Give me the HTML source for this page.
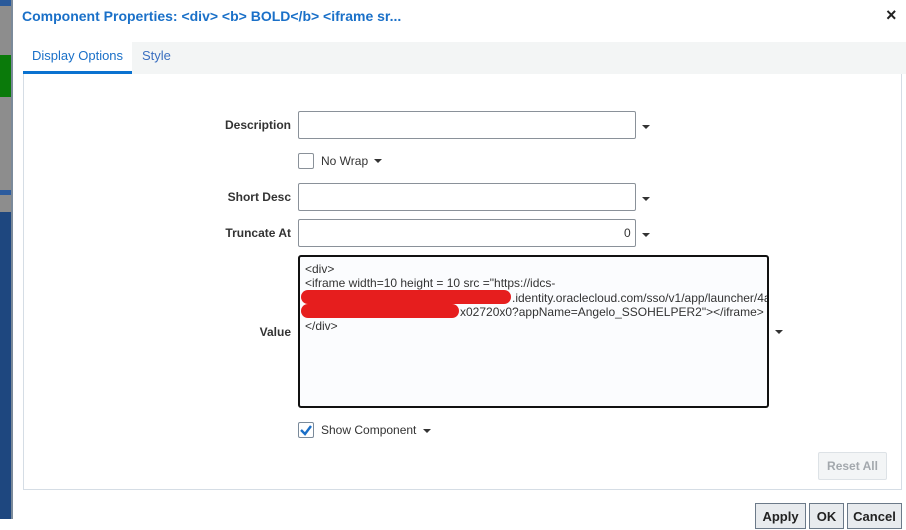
<!DOCTYPE html>
<html><head><style>
body{margin:0;width:906px;height:519px;overflow:hidden;background:#fff;font-family:"Liberation Sans",Arial,sans-serif;position:relative}
.a{position:absolute}
.lbl{position:absolute;right:615px;font-size:12px;font-weight:bold;color:#333;text-align:right}
.inp{position:absolute;left:298px;width:336px;height:26px;border:1px solid #8a9199;border-radius:2px;background:#fff}
.dd{position:absolute;width:0;height:0;border-left:4px solid transparent;border-right:4px solid transparent;border-top:4px solid #333}
.cb{position:absolute;width:14px;height:14px;border:1px solid #8a9199;border-radius:2px;background:#fff}
.btn{position:absolute;top:503px;height:24px;border:1px solid #6c7a89;background:#e8ebee;font-size:13px;font-weight:bold;color:#222;text-align:center;line-height:26px}
</style></head><body>
<div class="a" style="left:0;top:0;width:12px;height:519px;background:#8d8d8d"></div>
<div class="a" style="left:0;top:0;width:12px;height:6px;background:#2a5a9a"></div>
<div class="a" style="left:0;top:55px;width:11px;height:42px;background:#0a7a0a"></div>
<div class="a" style="left:0;top:190px;width:12px;height:5px;background:#2d5c9e"></div>
<div class="a" style="left:0;top:212px;width:12px;height:307px;background:#1e477f"></div>
<div class="a" style="left:11px;top:0;width:2px;height:519px;background:#7b8a9a"></div>
<div class="a" style="left:22px;top:8px;font-size:14px;font-weight:bold;color:#1a70c8">Component Properties: &lt;div&gt; &lt;b&gt; BOLD&lt;/b&gt; &lt;iframe sr...</div>
<div class="a" style="left:886px;top:5px;font-size:18px;font-weight:bold;color:#222">×</div>
<div class="a" style="left:132px;top:42px;width:774px;height:32px;background:#f3f5f5"></div>
<div class="a" style="left:32px;top:48px;font-size:13px;color:#1a70c8">Display Options</div>
<div class="a" style="left:142px;top:48px;font-size:13px;color:#3b6fc0">Style</div>
<div class="a" style="left:23px;top:71px;width:109px;height:3px;background:#0a72d0"></div>
<div class="a" style="left:23px;top:74px;width:877px;height:415px;border:1px solid #d5dde5;border-top:none"></div>

<div class="lbl" style="top:118px">Description</div>
<div class="inp" style="top:111px"></div><div class="dd" style="left:642px;top:125px"></div>
<div class="cb" style="left:298px;top:153px"></div>
<div class="a" style="left:321px;top:154px;font-size:12px;color:#333">No Wrap</div><div class="dd" style="left:374px;top:159px"></div>
<div class="lbl" style="top:190px">Short Desc</div>
<div class="inp" style="top:183px"></div><div class="dd" style="left:642px;top:197px"></div>
<div class="lbl" style="top:226px">Truncate At</div>
<div class="inp" style="top:219px"></div><div class="a" style="left:624px;top:226px;font-size:12px;color:#333">0</div><div class="dd" style="left:642px;top:233px"></div>
<div class="lbl" style="top:325px">Value</div>
<div class="a" style="left:298px;top:255px;width:467px;height:149px;border:2px solid #111;border-radius:3px;background:#fbfcfe;font-size:12px;line-height:14.3px;color:#333"><div style="padding:5px 0 0 5px;white-space:nowrap;overflow:hidden;width:462px">&lt;div&gt;<br>&lt;iframe width=10 height = 10 src ="https://idcs-<br><span style="padding-left:207px"></span>.identity.oraclecloud.com/sso/v1/app/launcher/4a<br><span style="padding-left:155px"></span>x02720x0?appName=Angelo_SSOHELPER2"&gt;&lt;/iframe&gt;<br>&lt;/div&gt;</div></div>
<div class="a" style="left:301px;top:290px;width:210px;height:14px;background:#e61e1e;border-radius:7px"></div>
<div class="a" style="left:301px;top:304px;width:158px;height:14px;background:#e61e1e;border-radius:7px"></div>
<div class="dd" style="left:775px;top:330px"></div>
<div class="cb" style="left:298px;top:422px;border-color:#7a8a9a"><svg width="14" height="14" viewBox="0 0 14 14"><path d="M2 7 L6 11 L12 3" stroke="#1a6fc8" stroke-width="2.4" fill="none"/></svg></div>
<div class="a" style="left:321px;top:423px;font-size:12px;color:#333">Show Component</div><div class="dd" style="left:423px;top:429px"></div>
<div class="a" style="left:818px;top:452px;width:67px;height:26px;border:1px solid #dde2e6;background:#f3f5f6;border-radius:2px;font-size:12px;font-weight:bold;color:#a3a8ad;text-align:center;line-height:26px">Reset All</div>
<div class="btn" style="left:755px;width:49px">Apply</div>
<div class="btn" style="left:809px;width:33px">OK</div>
<div class="btn" style="left:847px;width:53px">Cancel</div>
</body></html>
